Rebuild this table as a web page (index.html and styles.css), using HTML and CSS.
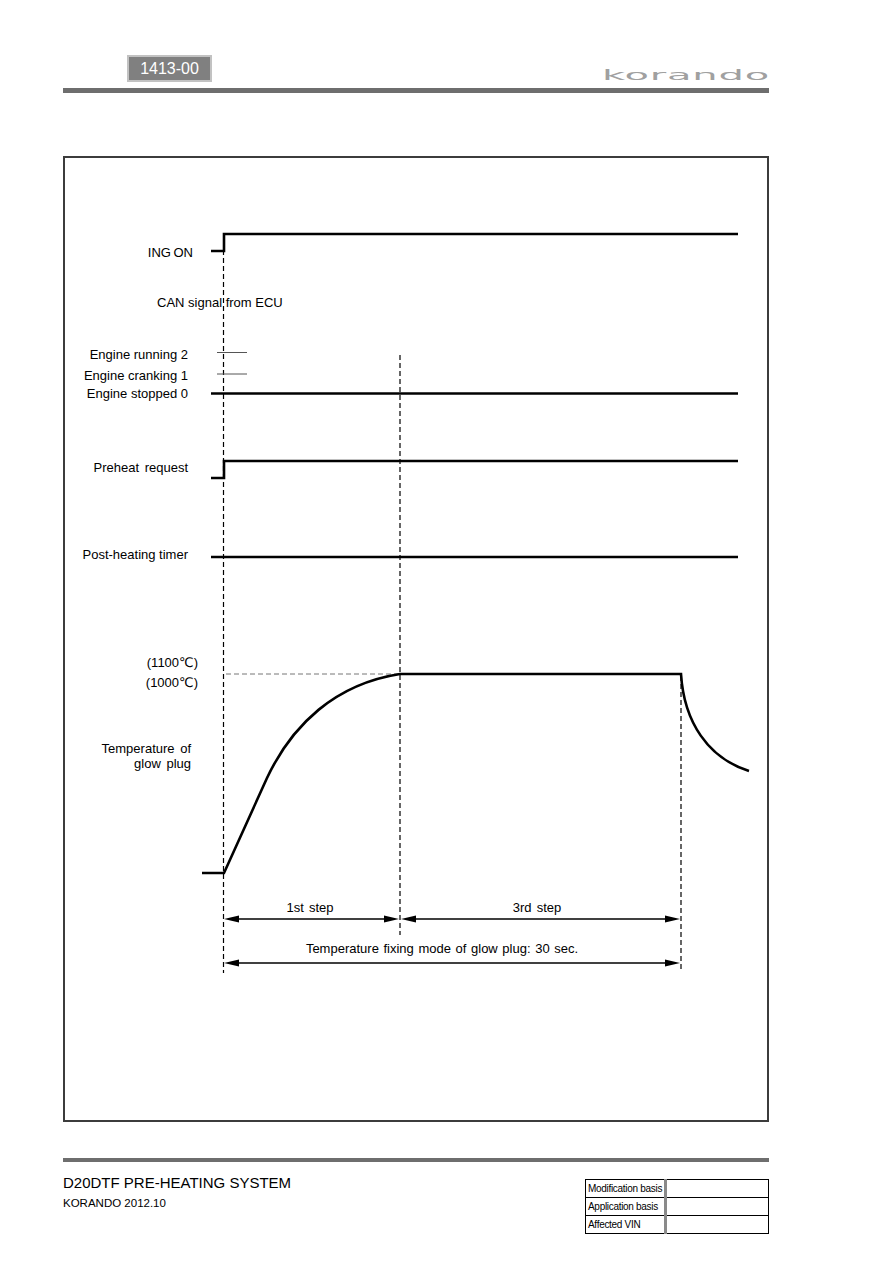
FILE: index.html
```html
<!DOCTYPE html>
<html>
<head>
<meta charset="utf-8">
<title>1413-00 D20DTF PRE-HEATING SYSTEM</title>
<link rel="stylesheet" href="styles.css">
</head>
<body>
<div class="page">
  <header class="header">
    <div class="badge">1413-00</div>
    <div class="logo">korando</div>
  </header>
  <div class="rule rule-top"></div>

  <section class="diagram">
    <svg class="chart" width="702" height="962" viewBox="65 158 702 962" xmlns="http://www.w3.org/2000/svg">
      <g class="lbl">
        <text x="193" y="256.5" text-anchor="end" word-spacing="-1">ING ON</text>
        <text x="157" y="306.5">CAN signal from ECU</text>
        <text x="188" y="359" text-anchor="end">Engine running 2</text>
        <text x="188" y="379.5" text-anchor="end">Engine cranking 1</text>
        <text x="188" y="398" text-anchor="end">Engine stopped 0</text>
        <text x="188" y="471.5" text-anchor="end" word-spacing="2">Preheat request</text>
        <text x="188" y="559" text-anchor="end">Post-heating timer</text>
        <text x="198" y="667" text-anchor="end">(1100℃)</text>
        <text x="198" y="687" text-anchor="end">(1000℃)</text>
        <text x="191" y="753" text-anchor="end" word-spacing="2">Temperature of</text>
        <text x="191" y="768" text-anchor="end" word-spacing="2">glow plug</text>
        <text x="310" y="912" text-anchor="middle" word-spacing="1.5">1st step</text>
        <text x="537" y="912" text-anchor="middle" word-spacing="1.5">3rd step</text>
        <text x="442" y="953" text-anchor="middle" word-spacing="1">Temperature fixing mode of glow plug: 30 sec.</text>
      </g>

      <g class="dash">
        <line x1="223.5" y1="250" x2="223.5" y2="973"/>
        <line x1="400" y1="355" x2="400" y2="935"/>
        <line x1="681" y1="676" x2="681" y2="972"/>
      </g>
      <line class="dash-grey" x1="226" y1="674" x2="400" y2="674"/>

      <g class="thin">
        <line x1="217" y1="352.5" x2="247" y2="352.5"/>
        <line x1="217" y1="374" x2="247" y2="374"/>
      </g>

      <g class="sig">
        <polyline points="211,251 224,251 224,234 738,234"/>
        <line x1="211" y1="393.5" x2="738" y2="393.5"/>
        <polyline points="211,478 224,478 224,461 738,461"/>
        <line x1="211" y1="557" x2="738" y2="557"/>
        <path d="M202,873 L224,873 L267,778 C292,725 335,684 400,674 L681,674 C684,722 708,758 749,771"/>
      </g>

      <g class="arrow">
        <line x1="230" y1="919" x2="393" y2="919"/>
        <line x1="407" y1="919" x2="674" y2="919"/>
        <line x1="230" y1="963" x2="674" y2="963"/>
      </g>
      <g class="head">
        <polygon points="224,919 239,915.5 239,922.5"/>
        <polygon points="399,919 384,915.5 384,922.5"/>
        <polygon points="401,919 416,915.5 416,922.5"/>
        <polygon points="680,919 665,915.5 665,922.5"/>
        <polygon points="224,963 239,959.5 239,966.5"/>
        <polygon points="680,963 665,959.5 665,966.5"/>
      </g>
    </svg>
  </section>

  <div class="rule rule-bottom"></div>
  <footer class="footer">
    <div class="doc">
      <div class="doc-title">D20DTF PRE-HEATING SYSTEM</div>
      <div class="doc-sub">KORANDO 2012.10</div>
    </div>
    <table class="basis">
      <tr><td class="k">Modification basis</td><td class="v"></td></tr>
      <tr><td class="k">Application basis</td><td class="v"></td></tr>
      <tr><td class="k">Affected VIN</td><td class="v"></td></tr>
    </table>
  </footer>
</div>
</body>
</html>
```

FILE: styles.css
```css
html, body {
  margin: 0;
  padding: 0;
  background: #ffffff;
}

body {
  font-family: "Liberation Sans", Arial, sans-serif;
  color: #000;
}

.page {
  width: 706px;
  margin-left: 63px;
}

.header {
  display: flex;
  justify-content: space-between;
  height: 88px;
}

.badge {
  align-self: flex-start;
  margin-top: 55px;
  margin-left: 64px;
  width: 85px;
  height: 27px;
  box-sizing: border-box;
  background: #808080;
  border: 2px solid #c2c2c2;
  color: #ffffff;
  font-size: 16px;
  line-height: 23px;
  text-align: center;
}

.logo {
  align-self: flex-end;
  margin-bottom: 6px;
  margin-right: -1px;
  font-family: "DejaVu Sans", sans-serif;
  font-size: 20px;
  font-weight: 400;
  line-height: 20px;
  letter-spacing: 0.4px;
  color: #a0a0a0;
  transform: scale(2, 0.73);
  transform-origin: right bottom;
}

.rule {
  background: #6e6e6e;
}

.rule-top {
  height: 5px;
}

.rule-bottom {
  height: 4px;
  margin-top: 36px;
}

.diagram {
  margin-top: 63px;
  height: 966px;
  box-sizing: border-box;
  border: 2px solid #3c3c3c;
}

.chart {
  display: block;
}

.lbl text {
  font-family: "Liberation Sans", "DejaVu Sans", Arial, sans-serif;
  font-size: 13px;
  fill: #000;
}

.dash line {
  stroke: #000;
  stroke-width: 1.2;
  stroke-dasharray: 5 3;
}

.dash-grey {
  stroke: #777;
  stroke-width: 1;
  stroke-dasharray: 5 3;
}

.thin line {
  stroke: #555;
  stroke-width: 1;
}

.sig polyline,
.sig line,
.sig path {
  fill: none;
  stroke: #000;
  stroke-width: 2.6;
  stroke-linejoin: miter;
}

.arrow line {
  stroke: #000;
  stroke-width: 1.4;
}

.head polygon {
  fill: #000;
}

.footer {
  display: flex;
  justify-content: space-between;
  align-items: flex-start;
  padding-top: 12px;
}

.doc-title {
  font-size: 15px;
  line-height: 17px;
}

.doc-sub {
  margin-top: 5px;
  font-size: 11.5px;
  line-height: 14px;
}

.basis {
  margin-top: 5px;
  width: 184px;
  border-collapse: collapse;
  border: 1.5px solid #000;
}

.basis td {
  height: 17px;
  padding: 0 0 0 2px;
  border-top: 1.5px solid #000;
  border-bottom: 1.5px solid #000;
  font-size: 10px;
  letter-spacing: -0.3px;
  white-space: nowrap;
}

.basis td.k {
  width: 76px;
  border-right: 3px solid #8a8a8a;
}
```
